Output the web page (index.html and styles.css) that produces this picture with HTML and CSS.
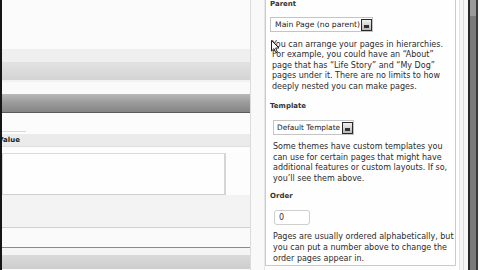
FILE: index.html
```html
<!DOCTYPE html>
<html>
<head>
<meta charset="utf-8">
<link rel="stylesheet" href="styles.css">
</head>
<body>
<div class="screen">
  <div class="edge"></div>
  <div class="main">
    <div class="band b1"></div>
    <div class="band b2"></div>
    <div class="band b3"></div>
    <div class="band b4"></div>
    <div class="band b5"></div>
    <div class="band b6"></div>
    <div class="band b7"><span class="stub"></span></div>
    <div class="band b8"><span class="colhead">Value</span></div>
    <div class="band b9"><div class="textbox"></div></div>
    <div class="band b10"></div>
    <div class="band b11"></div>
    <div class="band b12"></div>
    <div class="band b13"></div>
  </div>
  <div class="gutter"></div>
  <div class="panel">
    <div class="label l-parent">Parent</div>
    <div class="select s-parent"><span class="sel-text">Main Page (no parent)</span><span class="btn"><span class="tri"></span></span></div>
    <p class="help h1">You can arrange your pages in hierarchies.<br>For example, you could have an “About”<br>page that has “Life Story” and “My Dog”<br>pages under it. There are no limits to how<br>deeply nested you can make pages.</p>
    <div class="label l-template">Template</div>
    <div class="select s-template"><span class="sel-text">Default Template</span><span class="btn"><span class="tri"></span></span></div>
    <p class="help h2">Some themes have custom templates you<br>can use for certain pages that might have<br>additional features or custom layouts. If so,<br>you’ll see them above.</p>
    <div class="label l-order">Order</div>
    <div class="order">0</div>
    <p class="help h3">Pages are usually ordered alphabetically, but<br>you can put a number above to change the<br>order pages appear in.</p>
    <svg class="cursor" width="9" height="14" viewBox="0 0 9 14"><path d="M0.5 0.5 L0.5 11 L3 8.6 L4.8 12.8 L6.4 12.1 L4.7 8 L8 8 Z" fill="#fff" stroke="#222" stroke-width="1"/></svg>
  </div>
  <div class="rail"></div>
  <div class="scroll"><div class="thumb"></div></div>
</div>
</body>
</html>
```
FILE: styles.css
```css
html, body {
  margin: 0;
  padding: 0;
  background: #fcfcfc;
}
.screen {
  width: 480px;
  height: 270px;
  overflow: hidden;
  display: flex;
  font-family: "DejaVu Sans", Verdana, sans-serif;
  color: #333;
}
.edge {
  width: 2px;
  background: #151515;
  flex: none;
}
.main {
  width: 248px;
  flex: none;
  display: flex;
  flex-direction: column;
  overflow: hidden;
  border-right: 1px solid #dcdcdc;
}
.band { flex: none; }
.b1 { height: 49px; background: #fbfbfb; }
.b2 { height: 13px; background: #efefef; }
.b3 { height: 18px; background: linear-gradient(#e2e2e2, #d4d4d4); }
.b4 { height: 2px; background: #f2f2f2; }
.b5 { height: 12px; background: #fafafa; }
.b6 { height: 18px; background: linear-gradient(#b8b8b8, #9a9a9a 50%, #858585); border-bottom: 1px solid #5a5a5a; }
.b7 { height: 21px; background: #fcfcfc; display: flex; align-items: flex-end; }
.stub { width: 24px; height: 1px; background: #d8d8d8; margin-bottom: 2px; }
.b8 {
  height: 12px;
  background: #ebebeb;
  border-bottom: 1px solid #dedede;
  display: flex;
  align-items: center;
}
.colhead {
  font-size: 7px;
  font-weight: bold;
  color: #222;
  margin-left: -4px;
}
.b9 {
  height: 48px;
  background: #fdfdfd;
  padding-top: 6px;
  box-sizing: border-box;
}
.textbox {
  width: 224px;
  height: 42px;
  box-sizing: border-box;
  border: 1px solid #dadada;
  border-bottom-color: #d0d0d0;
  border-right: 2px double #d6d6d6;
  background: #fefefe;
}
.b10 { height: 32px; background: #f3f3f3; }
.b11 { height: 19px; background: #fafafa; border-top: 1px solid #cfcfcf; }
.b12 { height: 7px; background: #f5f5f5; border-top: 1px solid #8a8a8a; }
.b13 { height: 14px; background: linear-gradient(#dadada, #cdcdcd); }
.gutter {
  width: 13px;
  flex: none;
  background: #f9f9f9;
  border-right: 1px solid #e6e6e6;
}
.panel {
  position: relative;
  width: 191px;
  height: 266px;
  flex: none;
  box-sizing: border-box;
  background: #fefefe;
  border: 1px solid #cbcbcb;
  border-top: none;
  padding-left: 4px;
}
.label {
  font-size: 7px;
  font-weight: bold;
  line-height: 9px;
  color: #333;
  height: 9px;
}
.l-parent { margin-top: 0; }
.l-template { margin-top: 10px; }
.l-order { margin-top: 8px; }
.select {
  display: flex;
  align-items: center;
  box-sizing: border-box;
  height: 15px;
  border: 1px solid #c4c4c4;
  background: #fff;
  font-size: 7.7px;
  color: #222;
}
.sel-text { padding-left: 4px; flex: 1; white-space: nowrap; overflow: hidden; }
.s-parent { width: 103px; margin-top: 8px; }
.s-template { width: 81px; margin-top: 9px; margin-left: 3px; font-size: 7.4px; }
.s-template .sel-text { padding-left: 3px; }
.btn {
  width: 11px;
  height: 12px;
  margin-right: 0;
  flex: none;
  box-sizing: border-box;
  border: 1px solid #2a2a2a;
  background: linear-gradient(#f0f0f0, #b8b8b8);
  display: flex;
  align-items: flex-end;
  justify-content: center;
  padding-bottom: 2px;
}
.tri {
  width: 5px;
  height: 3px;
  background: #333;
}
.help {
  margin: 0;
  font-size: 8px;
  line-height: 10.4px;
  color: #2c2c2c;
  padding-left: 3px;
  white-space: nowrap;
}
.h1 { margin-top: 8px; padding-left: 2px; }
.h2 { margin-top: 7px; line-height: 10.6px; }
.h3 { margin-top: 7px; line-height: 10.8px; }
.order {
  margin-top: 9px;
  margin-left: 4px;
  width: 36px;
  height: 15px;
  box-sizing: border-box;
  border: 1px solid #cfcfcf;
  border-radius: 3px;
  font-size: 8px;
  line-height: 13px;
  padding-left: 4px;
  color: #333;
  background: #fff;
}
.cursor {
  position: absolute;
  left: 5px;
  top: 40px;
}
.rail {
  width: 12px;
  flex: none;
  background: linear-gradient(90deg, #fdfdfd 0 3px, #e4e4e4 3px 4px, #f6f6f6 4px 7px, #dcdcdc 7px 8px, #f8f8f8 8px);
}
.scroll {
  width: 10px;
  flex: none;
  background: linear-gradient(90deg, #2a2a2a 0 2px, #7a7a7a 2px 8px, #3a3a3a 8px);
  display: flex;
  flex-direction: column;
}
.thumb {
  height: 16px;
  background: linear-gradient(90deg, #2a2a2a 0 2px, #9a9a9a 2px 8px, #3a3a3a 8px);
}
```
